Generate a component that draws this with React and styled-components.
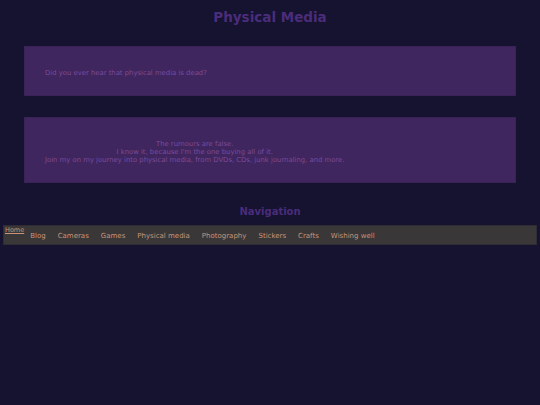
import React from "react";
import styled, { createGlobalStyle } from "styled-components";

const GlobalStyle = createGlobalStyle`
  html, body {
    margin: 0;
    padding: 0;
    background-color: #15132f;
  }
  body {
    font-family: "DejaVu Sans", Verdana, sans-serif;
  }
`;

const Page = styled.div`
  padding: 0 3px;
  min-height: 405px;
  box-sizing: border-box;
`;

const Title = styled.h1`
  margin: 0;
  padding-top: 10px;
  height: 46px;
  box-sizing: border-box;
  text-align: center;
  font-size: 13.5px;
  line-height: 15px;
  font-weight: bold;
  color: #4b2c7b;
`;

const Box = styled.section`
  margin: 0 21px ${(props) => props.gap || 0}px;
  padding: 22px 20px 18px;
  background-color: #40265e;
  border: 1px solid #3a2257;
  font-size: 6.85px;
  line-height: 8px;
  color: #7b4a9b;
`;

const Centered = styled.div`
  display: inline-block;
  text-align: center;
`;

const SubTitle = styled.h2`
  margin: 0;
  padding-top: 23px;
  height: 42px;
  box-sizing: border-box;
  text-align: center;
  font-size: 10px;
  line-height: 12px;
  font-weight: bold;
  color: #4b2c7b;
`;

const NavBar = styled.nav`
  display: flex;
  align-items: flex-start;
  height: 20px;
  box-sizing: border-box;
  background-color: #393737;
  border: 1px solid #2f2d33;
  font-size: 7px;
  line-height: 8px;
`;

const HomeLink = styled.a`
  color: #c99479;
  text-decoration: underline;
  font-size: 6.5px;
  padding: 0 0 0 1px;
`;

const NavList = styled.ul`
  display: flex;
  list-style: none;
  margin: 0;
  padding: 6px 0 0;
`;

const NavItem = styled.li`
  padding: 0 6px;
  color: #c99479;
`;

const links = [
  "Blog",
  "Cameras",
  "Games",
  "Physical media",
  "Photography",
  "Stickers",
  "Crafts",
  "Wishing well",
];

export default function App() {
  return (
    <Page>
      <GlobalStyle />
      <Title>Physical Media</Title>
      <Box gap={21}>Did you ever hear that physical media is dead?</Box>
      <Box>
        <Centered>
          The rumours are false.
          <br />
          I know it, because I'm the one buying all of it.
          <br />
          Join my on my journey into physical media, from DVDs, CDs, junk
          journaling, and more.
        </Centered>
      </Box>
      <SubTitle>Navigation</SubTitle>
      <NavBar>
        <HomeLink href="#">Home</HomeLink>
        <NavList>
          {links.map((l) => (
            <NavItem key={l}>{l}</NavItem>
          ))}
        </NavList>
      </NavBar>
    </Page>
  );
}
